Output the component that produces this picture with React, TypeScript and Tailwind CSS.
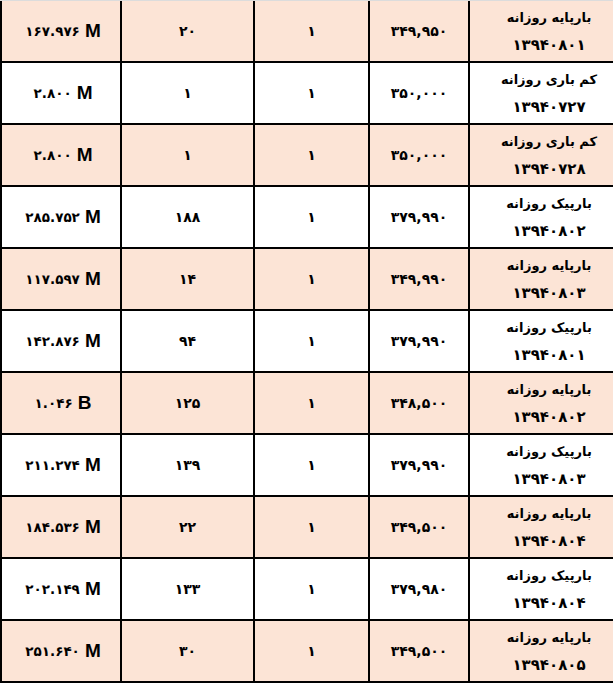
const rows = [
  { amount: "۱۶۷.۹۷۶", unit: "M", count: "۲۰", qty: "۱", price: "۳۴۹,۹۵۰", title: "بارپایه روزانه", date: "۱۳۹۴۰۸۰۱" },
  { amount: "۲.۸۰۰", unit: "M", count: "۱", qty: "۱", price: "۳۵۰,۰۰۰", title: "کم باری روزانه", date: "۱۳۹۴۰۷۲۷" },
  { amount: "۲.۸۰۰", unit: "M", count: "۱", qty: "۱", price: "۳۵۰,۰۰۰", title: "کم باری روزانه", date: "۱۳۹۴۰۷۲۸" },
  { amount: "۲۸۵.۷۵۲", unit: "M", count: "۱۸۸", qty: "۱", price: "۳۷۹,۹۹۰", title: "بارپیک روزانه", date: "۱۳۹۴۰۸۰۲" },
  { amount: "۱۱۷.۵۹۷", unit: "M", count: "۱۴", qty: "۱", price: "۳۴۹,۹۹۰", title: "بارپایه روزانه", date: "۱۳۹۴۰۸۰۳" },
  { amount: "۱۴۲.۸۷۶", unit: "M", count: "۹۴", qty: "۱", price: "۳۷۹,۹۹۰", title: "بارپیک روزانه", date: "۱۳۹۴۰۸۰۱" },
  { amount: "۱.۰۴۶", unit: "B", count: "۱۲۵", qty: "۱", price: "۳۴۸,۵۰۰", title: "بارپایه روزانه", date: "۱۳۹۴۰۸۰۲" },
  { amount: "۲۱۱.۲۷۴", unit: "M", count: "۱۳۹", qty: "۱", price: "۳۷۹,۹۹۰", title: "بارپیک روزانه", date: "۱۳۹۴۰۸۰۳" },
  { amount: "۱۸۴.۵۳۶", unit: "M", count: "۲۲", qty: "۱", price: "۳۴۹,۵۰۰", title: "بارپایه روزانه", date: "۱۳۹۴۰۸۰۴" },
  { amount: "۲۰۲.۱۴۹", unit: "M", count: "۱۳۳", qty: "۱", price: "۳۷۹,۹۸۰", title: "بارپیک روزانه", date: "۱۳۹۴۰۸۰۴" },
  { amount: "۲۵۱.۶۴۰", unit: "M", count: "۳۰", qty: "۱", price: "۳۴۹,۵۰۰", title: "بارپایه روزانه", date: "۱۳۹۴۰۸۰۵" },
];

const fa = "font-['DejaVu_Sans',sans-serif]";

export default function App() {
  return (
    <div className="h-[683px] w-[613px] overflow-hidden bg-white">
      <div className="w-[628px] border-t border-[#dcdcdc] text-black">
        {rows.map((r, i) => (
          <div
            key={i}
            className={
              "flex h-[62px] border-b-2 border-black " +
              (i % 2 === 0 ? "bg-[#fce4d6]" : "bg-white")
            }
          >
            <div
              dir="ltr"
              className="flex w-[122px] items-center justify-center gap-[5px] border-x-2 border-black pl-[4px]"
            >
              <span className={fa + " text-[13.5px] font-bold"}>{r.amount}</span>
              <span className="font-['Liberation_Sans',Arial,sans-serif] text-[19px] font-bold">{r.unit}</span>
            </div>
            <div className={"flex w-[133px] items-center justify-center border-r-2 border-black text-[14px] font-bold " + fa}>
              {r.count}
            </div>
            <div className={"flex w-[115px] items-center justify-center border-r-2 border-black text-[14px] font-bold " + fa}>
              {r.qty}
            </div>
            <div className={"flex w-[100px] items-center justify-center border-r-2 border-black text-[14px] font-bold " + fa}>
              {r.price}
            </div>
            <div
              dir="rtl"
              className={"flex flex-1 flex-col items-center justify-center gap-[7px] font-bold leading-[21px] " + fa}
            >
              <span className="text-[13px]">{r.title}</span>
              <span className="text-[15px]">{r.date}</span>
            </div>
          </div>
        ))}
      </div>
    </div>
  );
}
